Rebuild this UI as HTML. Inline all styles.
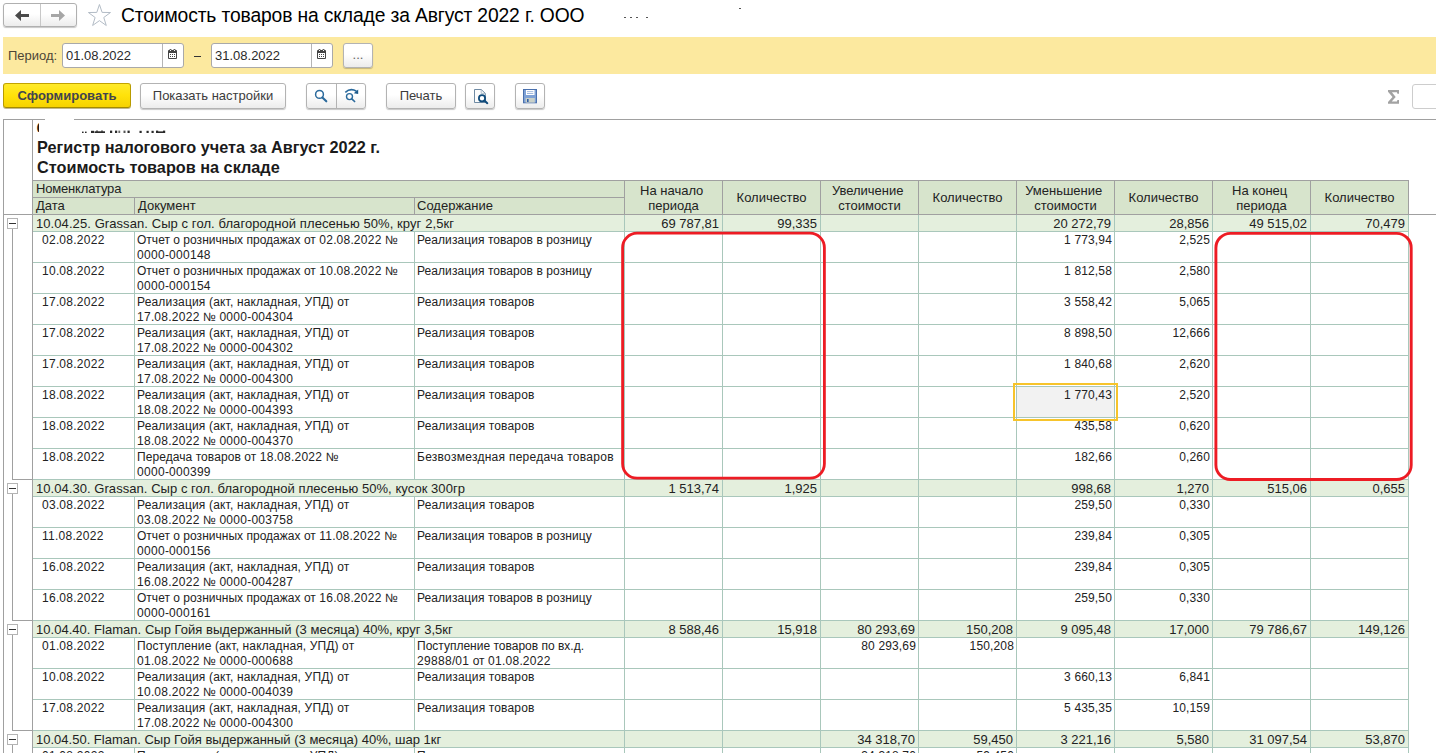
<!DOCTYPE html>
<html lang="ru"><head><meta charset="utf-8"><title>Стоимость товаров на складе</title>
<style>
*{box-sizing:border-box;margin:0;padding:0}
html,body{width:1436px;height:753px;overflow:hidden;background:#fff}
body{position:relative;font-family:"Liberation Sans",sans-serif;font-size:13px;color:#222}
.abs{position:absolute}
/* toolbar */
.btn{position:absolute;border:1px solid #b3b3b3;border-radius:3px;background:linear-gradient(#ffffff 0%,#ffffff 45%,#ececec 100%);box-shadow:0 1px 1px rgba(0,0,0,.22);text-align:center;color:#3c3c3c;font-size:13px;line-height:23px;white-space:nowrap}
.inp{position:absolute;border:1px solid #a9a9a9;border-radius:3px;background:#fff;height:25px;top:43px;font-size:13px;line-height:23px;color:#2a2a2a;padding-left:3px;white-space:nowrap}
.inp b{position:absolute;top:0;bottom:0;width:1px;background:#b5b5b5}
/* sheet */
.g{position:absolute;left:33px;width:1375px;height:17px;background:#e4efdd;border-bottom:1px solid #a9c7bb;font-size:13px;line-height:16px;white-space:nowrap}
.gt{position:absolute;left:3px;top:1px;letter-spacing:.08px}
.gn{position:absolute;font-size:13px;line-height:16px;white-space:nowrap}
.r{position:absolute;left:33px;width:1375px;height:31px;border-bottom:1px solid #a9c7bb;font-size:12px;line-height:15px;white-space:nowrap}
.r span{position:absolute;top:0;height:30px;padding-top:1px;letter-spacing:.07px}
u{text-decoration:none;letter-spacing:.3px}
.r i{font-style:normal}
.a{letter-spacing:.17px}.b{letter-spacing:.125px}.c{letter-spacing:.02px}.f{letter-spacing:.15px}.h{letter-spacing:.27px}.k{letter-spacing:0}
.d0{left:9px}
.d1{left:101px;border-left:1px solid #a9c7bb;padding-left:2px;width:280px}
.d2{left:381px;border-left:1px solid #a9c7bb;padding-left:2px;width:210px}
.dn{position:absolute;font-size:12px;line-height:15px;white-space:nowrap;letter-spacing:.15px}
.vl{position:absolute;width:1px;background:#a9c7bb;top:215px;height:540px}
.tb{position:absolute;left:7px;width:11px;height:11px;border:1px solid #b4b4b4;background:#fff}
.tb i{position:absolute;left:1px;top:4px;width:7px;height:1px;background:#333}
.tv{position:absolute;left:12px;width:1px;background:#a0a0a0}
.th{position:absolute;left:12px;width:20px;height:1px;background:#a0a0a0}
.hd{position:absolute;background:#d7e4cc;border-left:1px solid #a0a0a0;border-top:1px solid #a0a0a0;font-size:13px;white-space:pre;color:#222}
.hc{text-align:center;line-height:15px;top:180px;height:34px;width:98px;display:flex;align-items:center;justify-content:center}
</style></head><body>

<!-- top nav -->
<div class="btn" style="left:3px;top:3px;width:74px;height:24px;border-color:#b0b0b0"></div>
<div class="abs" style="left:40px;top:4px;width:1px;height:22px;background:#c8c8c8"></div>
<svg class="abs" style="left:0;top:0" width="120" height="34" viewBox="0 0 120 34">
 <path d="M15 15.5 L21 10 L21 14 L29 14 L29 17 L21 17 L21 21 Z" fill="#4a4a4a"/>
 <path d="M65 15.5 L59 10 L59 14 L51 14 L51 17 L59 17 L59 21 Z" fill="#a6a6a6"/>
 <path d="M99.45 4.50 L102.12 12.42 L110.48 12.52 L103.78 17.51 L106.27 25.48 L99.45 20.65 L92.63 25.48 L95.12 17.51 L88.42 12.52 L96.78 12.42 Z" fill="#fff" stroke="#b3bcc6" stroke-width="1"/>
</svg>
<div class="abs" style="left:121px;top:3.5px;font-size:19.3px;letter-spacing:-.14px;line-height:24px;color:#000;white-space:nowrap">Стоимость товаров на складе за Август 2022 г. ООО</div>
<div class="abs" style="left:624px;top:17px;width:2px;height:1px;background:#555"></div>
<div class="abs" style="left:630px;top:17px;width:2px;height:1px;background:#555"></div>
<div class="abs" style="left:636px;top:17px;width:2px;height:1px;background:#555"></div>
<div class="abs" style="left:646px;top:17px;width:2px;height:1px;background:#555"></div>
<div class="abs" style="left:739px;top:8px;width:2px;height:1px;background:#555"></div>

<!-- yellow band -->
<div class="abs" style="left:3px;top:37px;width:1433px;height:37px;background:#fce99f"></div>
<div class="abs" style="left:8px;top:48px;font-size:13px;line-height:15px;color:#4d4636">Период:</div>
<div class="inp" style="left:62px;width:122px">01.08.2022<b style="left:99px"></b></div>
<div class="abs" style="left:194px;top:56px;width:7px;height:1px;background:#333"></div>
<div class="inp" style="left:211px;width:122px">31.08.2022<b style="left:99px"></b></div>
<div class="btn" style="left:343px;top:43px;width:30px;height:25px;line-height:21px;color:#666">...</div>
<svg class="abs" style="left:150px;top:36px" width="240" height="40" viewBox="150 36 240 40">
 <g fill="#444">
  <rect x="168" y="50" width="9" height="9" rx="1"/>
  <rect x="169.6" y="49" width="1.8" height="2" rx=".6"/><rect x="173.6" y="49" width="1.8" height="2" rx=".6"/><circle cx="170.5" cy="50.4" r=".55" fill="#fff"/><circle cx="174.5" cy="50.4" r=".55" fill="#fff"/>
  <rect x="169" y="53" width="7" height="5" fill="#fff"/>
  <rect x="170" y="54" width="1" height="1"/><rect x="172" y="54" width="1" height="1"/><rect x="174" y="54" width="1" height="1"/>
  <rect x="170" y="56" width="1" height="1"/><rect x="172" y="56" width="1" height="1"/><rect x="174" y="56" width="1" height="1"/>
 </g>
 <g fill="#444" transform="translate(149 0)">
  <rect x="168" y="50" width="9" height="9" rx="1"/>
  <rect x="169.6" y="49" width="1.8" height="2" rx=".6"/><rect x="173.6" y="49" width="1.8" height="2" rx=".6"/><circle cx="170.5" cy="50.4" r=".55" fill="#fff"/><circle cx="174.5" cy="50.4" r=".55" fill="#fff"/>
  <rect x="169" y="53" width="7" height="5" fill="#fff"/>
  <rect x="170" y="54" width="1" height="1"/><rect x="172" y="54" width="1" height="1"/><rect x="174" y="54" width="1" height="1"/>
  <rect x="170" y="56" width="1" height="1"/><rect x="172" y="56" width="1" height="1"/><rect x="174" y="56" width="1" height="1"/>
 </g>
</svg>

<!-- command bar -->
<div class="btn" style="left:3px;top:83px;width:128px;height:25px;line-height:23.5px;font-weight:bold;color:#42444f;border-color:#c2a300 #b89b00 #a48a00;background:linear-gradient(#ffea2a 0%,#ffe20a 50%,#f6d200 100%);box-shadow:0 1px 0 rgba(120,100,0,.45)">Сформировать</div>
<div class="btn" style="left:140px;top:83px;width:146px;height:26px;line-height:24.5px">Показать настройки</div>
<div class="btn" style="left:306px;top:83px;width:60px;height:26px"></div>
<div class="abs" style="left:336px;top:84px;width:1px;height:24px;background:#b3b3b3"></div>
<div class="btn" style="left:386px;top:83px;width:70px;height:26px;line-height:24.5px">Печать</div>
<div class="btn" style="left:465px;top:83px;width:30px;height:26px"></div>
<div class="btn" style="left:515px;top:83px;width:30px;height:26px"></div>
<svg class="abs" style="left:300px;top:80px" width="250" height="32" viewBox="300 80 250 32">
 <circle cx="319.5" cy="94.4" r="3.9" fill="none" stroke="#2b6a9c" stroke-width="1.5"/>
 <path d="M322.4 97.4 L326.3 101.3" stroke="#2b6a9c" stroke-width="2.1" stroke-linecap="round"/>
 <circle cx="349.5" cy="96.6" r="3" fill="none" stroke="#2b6a9c" stroke-width="1.4"/>
 <path d="M351.8 98.9 L354.6 101.5" stroke="#2b6a9c" stroke-width="1.7" stroke-linecap="round"/>
 <path d="M345.3 92.3 Q350.5 87.6 356.5 91.2" fill="none" stroke="#2b6a9c" stroke-width="1.6"/>
 <path d="M353.8 93.2 L358.2 89.6 L358.2 94 Z" fill="#1b5a8c"/>
 <path d="M474.5 89.5 H481.2 L485.3 93.4 V102.5 H474.5 Z" fill="#fcfcfc" stroke="#5f7d99" stroke-width="0.9"/>
 <path d="M481.2 89.5 V93.4 H485.3" fill="none" stroke="#9db0c2" stroke-width="0.8"/>
 <circle cx="482" cy="98.2" r="3.1" fill="#fff" stroke="#0e4a7b" stroke-width="1.8"/>
 <path d="M484.4 100.6 L487.3 103.2" stroke="#0e4a7b" stroke-width="2" stroke-linecap="round"/>
 <rect x="523.5" y="89.5" width="13" height="13.3" fill="#7fa2d6" stroke="#4a70ad" stroke-width="1"/>
 <rect x="526" y="90" width="8.5" height="5" fill="#fff"/>
 <rect x="527" y="91.3" width="6.3" height="0.8" fill="#8aa8d8"/><rect x="527" y="93" width="6.3" height="0.8" fill="#8aa8d8"/>
 <rect x="525.6" y="98" width="9.2" height="4.6" fill="#c9d0c8"/>
 <rect x="527" y="99" width="1.6" height="3" fill="#2f5da6"/>
</svg>
<svg class="abs" style="left:1384px;top:86px" width="20" height="22" viewBox="1384 86 20 22"><path d="M1388 90 H1399 V93.7 H1397.4 L1396.9 92.3 H1391.9 L1395.7 96.9 L1391.7 101.5 H1396.9 L1397.4 100.1 H1399 V103.8 H1388 V102 L1392.5 96.9 L1388 91.8 Z" fill="#a2a2a2"/></svg>
<div class="abs" style="left:1412px;top:84px;width:40px;height:25px;border:1px solid #cdcdcd;border-radius:3px;background:#fff"></div>

<!-- sheet frame -->
<div class="abs" style="left:3px;top:119px;width:1433px;height:1px;background:#a0a0a0"></div>
<div class="abs" style="left:3px;top:119px;width:1px;height:640px;background:#a0a0a0"></div>
<div class="abs" style="left:32px;top:119px;width:1px;height:640px;background:#a0a0a0"></div>
<div class="abs" style="left:3px;top:214px;width:1433px;height:1px;background:#a0a0a0"></div>

<!-- report title -->
<div class="abs" style="left:36px;top:123px;width:3.3px;height:9.3px;overflow:hidden"><div style="position:absolute;left:0.6px;top:-4px;font-size:16.25px;font-weight:bold;line-height:19px;color:#1a1a1a">О</div></div>
<div class="abs" style="left:45px;top:118px;width:29px;height:3px;background:#fff"></div>
<svg class="abs" style="left:80px;top:129px" width="90" height="5" viewBox="80 129 90 5" fill="#2a2a2a">
 <rect x="82" y="131.6" width="1.6" height="1.4"/><rect x="85" y="131.6" width="1.6" height="1.4"/>
 <rect x="91" y="130.8" width="3" height="2.2"/><rect x="94.5" y="131.3" width="10.5" height="1.7"/><rect x="96" y="130.6" width="2" height="1"/><rect x="101" y="130.6" width="2" height="1"/>
 <rect x="110" y="130.6" width="2.2" height="2.4"/><rect x="115" y="130.6" width="2.2" height="2.4"/><rect x="118.4" y="130.6" width="1.8" height="2.4" opacity=".7"/><rect x="123.5" y="130.6" width="2" height="2.4" opacity=".8"/><rect x="127.5" y="130.6" width="2.2" height="2.4"/>
 <rect x="139.5" y="130.8" width="2.2" height="2.2"/><rect x="146.5" y="130.8" width="2.2" height="2.2"/><rect x="151.5" y="130.8" width="2.2" height="2.2"/><rect x="156" y="130.6" width="2.2" height="2.4"/><rect x="156" y="131.4" width="7" height="1.6"/><rect x="163" y="130.6" width="2.2" height="2.4"/>
</svg>
<div class="abs" style="left:37px;top:138px;font-size:16.25px;font-weight:bold;line-height:19.5px;white-space:nowrap;color:#1a1a1a">Регистр налогового учета за Август 2022 г.<br>Стоимость товаров на складе</div>

<!-- header -->
<div class="hd" style="left:32px;top:180px;width:592px;height:17px;line-height:16px;padding-left:3px;letter-spacing:-.17px">Номенклатура</div>
<div class="hd" style="left:32px;top:197px;width:103px;height:17px;line-height:16px;padding-left:3px">Дата</div>
<div class="hd" style="left:134px;top:197px;width:281px;height:17px;line-height:16px;padding-left:3px">Документ</div>
<div class="hd" style="left:414px;top:197px;width:211px;height:17px;line-height:16px;padding-left:2px">Содержание</div>
<div class="hd hc" style="left:624px">На начало 
периода</div>
<div class="hd hc" style="left:722px">Количество</div>
<div class="hd hc" style="left:820px">Увеличение 
стоимости</div>
<div class="hd hc" style="left:918px">Количество</div>
<div class="hd hc" style="left:1016px">Уменьшение 
стоимости</div>
<div class="hd hc" style="left:1114px">Количество</div>
<div class="hd hc" style="left:1212px">На конец 
периода</div>
<div class="hd hc" style="left:1310px;width:99px;border-right:1px solid #a0a0a0">Количество</div>

<!-- rows -->
<div class="g" style="top:215px"><span class="gt" style="letter-spacing:.08px">10.04.25. Grassan. Сыр с гол. благородной плесенью 50%, круг 2,5кг</span></div>
<span class="gn" style="top:216px;right:717px">69 787,81</span>
<span class="gn" style="top:216px;right:619px">99,335</span>
<span class="gn" style="top:216px;right:325px">20 272,79</span>
<span class="gn" style="top:216px;right:227px">28,856</span>
<span class="gn" style="top:216px;right:129px">49 515,02</span>
<span class="gn" style="top:216px;right:31px">70,479</span>
<div class="r" style="top:232px"><span class="d0"><u>02</u>.<u>08</u>.<u>2022</u></span><span class="d1"><i class="c">Отчет о розничных продажах от <u>02</u>.<u>08</u>.<u>2022</u> №</i><br><u>0000</u>-<u>000148</u></span><span class="d2"><i class="e">Реализация товаров в розницу</i></span></div>
<span class="dn" style="top:233px;right:324px">1 773,94</span>
<span class="dn" style="top:233px;right:226px">2,525</span>
<div class="r" style="top:263px"><span class="d0"><u>10</u>.<u>08</u>.<u>2022</u></span><span class="d1"><i class="c">Отчет о розничных продажах от <u>10</u>.<u>08</u>.<u>2022</u> №</i><br><u>0000</u>-<u>000154</u></span><span class="d2"><i class="e">Реализация товаров в розницу</i></span></div>
<span class="dn" style="top:264px;right:324px">1 812,58</span>
<span class="dn" style="top:264px;right:226px">2,580</span>
<div class="r" style="top:294px"><span class="d0"><u>17</u>.<u>08</u>.<u>2022</u></span><span class="d1"><i class="a">Реализация (акт, накладная, УПД) от</i><br><u>17</u>.<u>08</u>.<u>2022</u> № <u>0000</u>-<u>004304</u></span><span class="d2"><i class="f">Реализация товаров</i></span></div>
<span class="dn" style="top:295px;right:324px">3 558,42</span>
<span class="dn" style="top:295px;right:226px">5,065</span>
<div class="r" style="top:325px"><span class="d0"><u>17</u>.<u>08</u>.<u>2022</u></span><span class="d1"><i class="a">Реализация (акт, накладная, УПД) от</i><br><u>17</u>.<u>08</u>.<u>2022</u> № <u>0000</u>-<u>004302</u></span><span class="d2"><i class="f">Реализация товаров</i></span></div>
<span class="dn" style="top:326px;right:324px">8 898,50</span>
<span class="dn" style="top:326px;right:226px">12,666</span>
<div class="r" style="top:356px"><span class="d0"><u>17</u>.<u>08</u>.<u>2022</u></span><span class="d1"><i class="a">Реализация (акт, накладная, УПД) от</i><br><u>17</u>.<u>08</u>.<u>2022</u> № <u>0000</u>-<u>004300</u></span><span class="d2"><i class="f">Реализация товаров</i></span></div>
<span class="dn" style="top:357px;right:324px">1 840,68</span>
<span class="dn" style="top:357px;right:226px">2,620</span>
<div class="r" style="top:387px"><span class="d0"><u>18</u>.<u>08</u>.<u>2022</u></span><span class="d1"><i class="a">Реализация (акт, накладная, УПД) от</i><br><u>18</u>.<u>08</u>.<u>2022</u> № <u>0000</u>-<u>004393</u></span><span class="d2"><i class="f">Реализация товаров</i></span></div>
<span class="dn" style="top:388px;right:324px">1 770,43</span>
<span class="dn" style="top:388px;right:226px">2,520</span>
<div class="r" style="top:418px"><span class="d0"><u>18</u>.<u>08</u>.<u>2022</u></span><span class="d1"><i class="a">Реализация (акт, накладная, УПД) от</i><br><u>18</u>.<u>08</u>.<u>2022</u> № <u>0000</u>-<u>004370</u></span><span class="d2"><i class="f">Реализация товаров</i></span></div>
<span class="dn" style="top:419px;right:324px">435,58</span>
<span class="dn" style="top:419px;right:226px">0,620</span>
<div class="r" style="top:449px"><span class="d0"><u>18</u>.<u>08</u>.<u>2022</u></span><span class="d1">Передача товаров от <u>18</u>.<u>08</u>.<u>2022</u> №<br><u>0000</u>-<u>000399</u></span><span class="d2"><i class="h">Безвозмездная передача товаров</i></span></div>
<span class="dn" style="top:450px;right:324px">182,66</span>
<span class="dn" style="top:450px;right:226px">0,260</span>
<div class="g" style="top:480px"><span class="gt" style="letter-spacing:.05px">10.04.30. Grassan. Сыр с гол. благородной плесенью 50%, кусок 300гр</span></div>
<span class="gn" style="top:481px;right:717px">1 513,74</span>
<span class="gn" style="top:481px;right:619px">1,925</span>
<span class="gn" style="top:481px;right:325px">998,68</span>
<span class="gn" style="top:481px;right:227px">1,270</span>
<span class="gn" style="top:481px;right:129px">515,06</span>
<span class="gn" style="top:481px;right:31px">0,655</span>
<div class="r" style="top:497px"><span class="d0"><u>03</u>.<u>08</u>.<u>2022</u></span><span class="d1"><i class="a">Реализация (акт, накладная, УПД) от</i><br><u>03</u>.<u>08</u>.<u>2022</u> № <u>0000</u>-<u>003758</u></span><span class="d2"><i class="f">Реализация товаров</i></span></div>
<span class="dn" style="top:498px;right:324px">259,50</span>
<span class="dn" style="top:498px;right:226px">0,330</span>
<div class="r" style="top:528px"><span class="d0"><u>11</u>.<u>08</u>.<u>2022</u></span><span class="d1"><i class="c">Отчет о розничных продажах от <u>11</u>.<u>08</u>.<u>2022</u> №</i><br><u>0000</u>-<u>000156</u></span><span class="d2"><i class="e">Реализация товаров в розницу</i></span></div>
<span class="dn" style="top:529px;right:324px">239,84</span>
<span class="dn" style="top:529px;right:226px">0,305</span>
<div class="r" style="top:559px"><span class="d0"><u>16</u>.<u>08</u>.<u>2022</u></span><span class="d1"><i class="a">Реализация (акт, накладная, УПД) от</i><br><u>16</u>.<u>08</u>.<u>2022</u> № <u>0000</u>-<u>004287</u></span><span class="d2"><i class="f">Реализация товаров</i></span></div>
<span class="dn" style="top:560px;right:324px">239,84</span>
<span class="dn" style="top:560px;right:226px">0,305</span>
<div class="r" style="top:590px"><span class="d0"><u>16</u>.<u>08</u>.<u>2022</u></span><span class="d1"><i class="c">Отчет о розничных продажах от <u>16</u>.<u>08</u>.<u>2022</u> №</i><br><u>0000</u>-<u>000161</u></span><span class="d2"><i class="e">Реализация товаров в розницу</i></span></div>
<span class="dn" style="top:591px;right:324px">259,50</span>
<span class="dn" style="top:591px;right:226px">0,330</span>
<div class="g" style="top:621px"><span class="gt" style="letter-spacing:.028px">10.04.40. Flaman. Сыр Гойя выдержанный (3 месяца) 40%, круг 3,5кг</span></div>
<span class="gn" style="top:622px;right:717px">8 588,46</span>
<span class="gn" style="top:622px;right:619px">15,918</span>
<span class="gn" style="top:622px;right:521px">80 293,69</span>
<span class="gn" style="top:622px;right:423px">150,208</span>
<span class="gn" style="top:622px;right:325px">9 095,48</span>
<span class="gn" style="top:622px;right:227px">17,000</span>
<span class="gn" style="top:622px;right:129px">79 786,67</span>
<span class="gn" style="top:622px;right:31px">149,126</span>
<div class="r" style="top:638px"><span class="d0"><u>01</u>.<u>08</u>.<u>2022</u></span><span class="d1"><i class="b">Поступление (акт, накладная, УПД) от</i><br><u>01</u>.<u>08</u>.<u>2022</u> № <u>0000</u>-<u>000688</u></span><span class="d2"><i class="k">Поступление товаров по вх.д.</i><br><u>29888</u>/<u>01</u> от <u>01</u>.<u>08</u>.<u>2022</u></span></div>
<span class="dn" style="top:639px;right:520px">80 293,69</span>
<span class="dn" style="top:639px;right:422px">150,208</span>
<div class="r" style="top:669px"><span class="d0"><u>10</u>.<u>08</u>.<u>2022</u></span><span class="d1"><i class="a">Реализация (акт, накладная, УПД) от</i><br><u>10</u>.<u>08</u>.<u>2022</u> № <u>0000</u>-<u>004039</u></span><span class="d2"><i class="f">Реализация товаров</i></span></div>
<span class="dn" style="top:670px;right:324px">3 660,13</span>
<span class="dn" style="top:670px;right:226px">6,841</span>
<div class="r" style="top:700px"><span class="d0"><u>17</u>.<u>08</u>.<u>2022</u></span><span class="d1"><i class="a">Реализация (акт, накладная, УПД) от</i><br><u>17</u>.<u>08</u>.<u>2022</u> № <u>0000</u>-<u>004300</u></span><span class="d2"><i class="f">Реализация товаров</i></span></div>
<span class="dn" style="top:701px;right:324px">5 435,35</span>
<span class="dn" style="top:701px;right:226px">10,159</span>
<div class="g" style="top:731px"><span class="gt" style="letter-spacing:.004px">10.04.50. Flaman. Сыр Гойя выдержанный (3 месяца) 40%, шар 1кг</span></div>
<span class="gn" style="top:732px;right:521px">34 318,70</span>
<span class="gn" style="top:732px;right:423px">59,450</span>
<span class="gn" style="top:732px;right:325px">3 221,16</span>
<span class="gn" style="top:732px;right:227px">5,580</span>
<span class="gn" style="top:732px;right:129px">31 097,54</span>
<span class="gn" style="top:732px;right:31px">53,870</span>
<div class="r" style="top:748px"><span class="d0"><u>01</u>.<u>08</u>.<u>2022</u></span><span class="d1"><i class="b">Поступление (акт, накладная, УПД) от</i><br><u>01</u>.<u>08</u>.<u>2022</u> № <u>0000</u>-<u>000689</u></span><span class="d2"><i class="k">Поступление товаров по вх.д.</i><br><u>29889</u>/<u>01</u> от <u>01</u>.<u>08</u>.<u>2022</u></span></div>
<span class="dn" style="top:749px;right:520px">34 318,70</span>
<span class="dn" style="top:749px;right:422px">59,450</span>
<!-- vertical grid lines -->
<div class="vl" style="left:624px"></div><div class="vl" style="left:722px"></div><div class="vl" style="left:820px"></div><div class="vl" style="left:918px"></div><div class="vl" style="left:1016px"></div><div class="vl" style="left:1114px"></div><div class="vl" style="left:1212px"></div><div class="vl" style="left:1310px"></div><div class="vl" style="left:1408px"></div>
<!-- selected cell -->
<div class="abs" style="left:1017px;top:387px;width:97px;height:30px;background:#f2f2f2"></div>
<div class="abs" style="left:1013px;top:383px;width:105px;height:38px;border:2px solid #f7c42b"></div>
<span class="dn" style="top:388px;right:324px">1 770,43</span>
<!-- tree -->
<div class="tb" style="top:218px"><i></i></div>
<div class="tv" style="top:229px;height:250px"></div>
<div class="th" style="top:479px"></div>
<div class="tb" style="top:483px"><i></i></div>
<div class="tv" style="top:494px;height:126px"></div>
<div class="th" style="top:620px"></div>
<div class="tb" style="top:624px"><i></i></div>
<div class="tv" style="top:635px;height:95px"></div>
<div class="th" style="top:730px"></div>
<div class="tb" style="top:734px"><i></i></div>
<div class="tv" style="top:745px;height:33px"></div>
<div class="th" style="top:778px"></div>
<!-- red annotations -->
<svg class="abs" style="left:0;top:0" width="1436" height="753" viewBox="0 0 1436 753">
 <rect x="622.6" y="233.2" width="201.8" height="245" rx="14.5" ry="14.5" fill="none" stroke="#ed1c24" stroke-width="2.8"/>
 <rect x="1215.9" y="233.4" width="195.3" height="246.1" rx="14.5" ry="14.5" fill="none" stroke="#ed1c24" stroke-width="2.9"/>
</svg>
</body></html>
